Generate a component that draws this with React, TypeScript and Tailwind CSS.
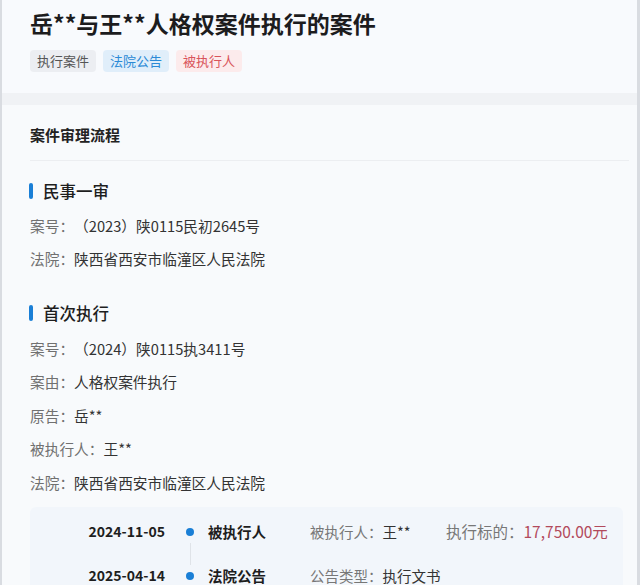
const FIRST = [
  { label: "案号：", value: "（2023）陕0115民初2645号" },
  { label: "法院：", value: "陕西省西安市临潼区人民法院" },
];

const EXEC = [
  { label: "案号：", value: "（2024）陕0115执3411号" },
  { label: "案由：", value: "人格权案件执行" },
  { label: "原告：", value: "岳**" },
  { label: "被执行人：", value: "王**" },
  { label: "法院：", value: "陕西省西安市临潼区人民法院" },
];

function Heading({ children }: { children: React.ReactNode }) {
  return (
    <div className="flex items-center h-6">
      <div className="w-[4px] h-[16px] rounded-sm bg-[#1a7fd6] ml-[-1px]" />
      <div className="ml-[10px] text-[16.5px] font-medium text-[#1e1e1e]">{children}</div>
    </div>
  );
}

function InfoRow({ label, value }: { label: string; value: string }) {
  return (
    <div className="flex items-center h-[33.5px] text-[14.7px]">
      <span className="text-[#707070]">{label}</span>
      <span className="text-[#333]">{value}</span>
    </div>
  );
}

export default function App() {
  return (
    <div
      className="w-[640px] h-[585px] overflow-hidden bg-[#f8fafc] border-l-[2px] border-r-[3px] border-[#d9dce1]"
      style={{ fontFamily: '"Noto Sans CJK SC", "Noto Sans", sans-serif' }}
    >
      {/* header card */}
      <div className="h-[93px] bg-[#f8fafd] pl-[28px] pt-[7px]">
        <h1 className="text-[23px] leading-[32px] font-bold text-[#1c1c1e]">岳**与王**人格权案件执行的案件</h1>
        <div className="flex gap-[7px] mt-[11px]">
          <span className="h-[22px] px-[7px] flex items-center rounded-sm bg-[#eceef2] text-[13px] text-[#555]">执行案件</span>
          <span className="h-[22px] px-[7px] flex items-center rounded-sm bg-[#e0eefa] text-[13px] text-[#2b8ad6]">法院公告</span>
          <span className="h-[22px] px-[7px] flex items-center rounded-sm bg-[#fcebec] text-[13px] text-[#d9535a]">被执行人</span>
        </div>
      </div>

      <div className="h-[12px] bg-[#f0f2f5]" />

      {/* process card */}
      <div className="pl-[28px] pt-[19px] bg-[#f8fafc]">
        <div className="text-[15px] leading-[22px] font-bold text-[#222]">案件审理流程</div>
        <div className="mt-[14px] h-px bg-[#eceef1] mr-[8px]" />

        <div className="mt-[18px]">
          <Heading>民事一审</Heading>
          <div className="mt-[6px]">
            {FIRST.map((r) => (
              <InfoRow key={r.label} {...r} />
            ))}
          </div>
        </div>

        <div className="mt-[25px]">
          <Heading>首次执行</Heading>
          <div className="mt-[7px]">
            {EXEC.map((r) => (
              <InfoRow key={r.label} {...r} />
            ))}
          </div>
        </div>

        {/* timeline */}
        <div className="mt-[7px] mr-[14px] rounded-md bg-[#f2f6fb] pt-[14px] pb-4">
          <div className="flex items-center h-[22px] text-[14.5px]">
            <div className="w-[135px] text-right text-[14px] font-bold text-[#1e1e1e]">2024-11-05</div>
            <div className="w-[43px] pl-[21px]">
              <div className="w-[8px] h-[8px] rounded-full bg-[#1a7fd6]" />
            </div>
            <div className="w-[102px] font-bold text-[#1e1e1e]">被执行人</div>
            <div className="w-[136px]">
              <span className="text-[#777]">被执行人：</span>
              <span className="text-[#333]">王**</span>
            </div>
            <div className="text-[15.5px]">
              <span className="text-[#777]">执行标的：</span>
              <span className="text-[#b24a5c]">17,750.00元</span>
            </div>
          </div>
          <div className="flex h-[22px]">
            <div className="w-[135px]" />
            <div className="w-[43px] pl-[25px]">
              <div className="w-px h-full bg-[#dfe3e8]" />
            </div>
          </div>
          <div className="flex items-center h-[22px] text-[14.5px]">
            <div className="w-[135px] text-right text-[14px] font-bold text-[#1e1e1e]">2025-04-14</div>
            <div className="w-[43px] pl-[21px]">
              <div className="w-[8px] h-[8px] rounded-full bg-[#1a7fd6]" />
            </div>
            <div className="w-[102px] font-bold text-[#1e1e1e]">法院公告</div>
            <div>
              <span className="text-[#777]">公告类型：</span>
              <span className="text-[#333]">执行文书</span>
            </div>
          </div>
        </div>
      </div>
    </div>
  );
}
